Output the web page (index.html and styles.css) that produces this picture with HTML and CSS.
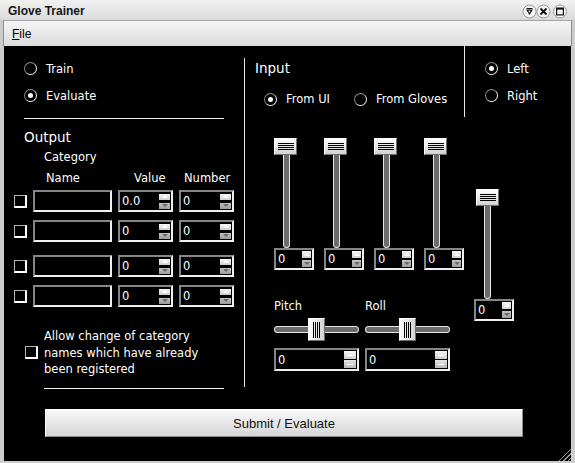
FILE: index.html
```html
<!DOCTYPE html>
<html>
<head>
<meta charset="utf-8">
<title>Glove Trainer</title>
<link rel="stylesheet" href="styles.css">
</head>
<body>
<div class="window">
  <div class="titlebar">
    <span class="title">Glove Trainer</span>
    <svg class="wm" width="50" height="18" viewBox="0 0 50 18">
      <g fill="#f6f6f6" stroke="#9a9a9a" stroke-width="1">
        <circle cx="7.5" cy="9.5" r="6.5"/>
        <circle cx="21.5" cy="9.5" r="6.5"/>
        <circle cx="38" cy="9.5" r="6.5"/>
      </g>
      <path d="M4.5 6.5 H10.5 M5.2 8.2 L7.5 11.8 L9.8 8.2 Z" stroke="#111" stroke-width="1.2" fill="none"/>
      <path d="M18.5 6.5 L24.5 12.5 M24.5 6.5 L18.5 12.5" stroke="#111" stroke-width="1.8"/>
      <rect x="34.6" y="6.1" width="6.8" height="6.8" fill="none" stroke="#111" stroke-width="1.2"/>
      <line x1="34.6" y1="6.8" x2="41.4" y2="6.8" stroke="#111" stroke-width="1.6"/>
    </svg>
  </div>
  <div class="menubar"><span class="menu"><u>F</u>ile</span></div>
  <div class="content">
    <div class="main">
      <div class="left">
        <div class="radios">
          <div class="radio"><span class="rb"></span>Train</div>
          <div class="radio"><span class="rb on"></span>Evaluate</div>
        </div>
        <div class="hr hr1"></div>
        <div class="heading out-h">Output</div>
        <div class="category">Category</div>
        <div class="thead"><span class="h-name">Name</span><span class="h-value">Value</span><span class="h-num">Number</span></div>
        <div class="trow first">
          <span class="cb"></span><span class="field"></span>
          <span class="spin"><span class="val">0.0</span><span class="arrows"><span class="arr up"></span><span class="arr dn"></span></span></span>
          <span class="spin"><span class="val">0</span><span class="arrows"><span class="arr up"></span><span class="arr dn"></span></span></span>
        </div>
        <div class="trow">
          <span class="cb"></span><span class="field"></span>
          <span class="spin"><span class="val">0</span><span class="arrows"><span class="arr up"></span><span class="arr dn"></span></span></span>
          <span class="spin"><span class="val">0</span><span class="arrows"><span class="arr up"></span><span class="arr dn"></span></span></span>
        </div>
        <div class="trow wide">
          <span class="cb"></span><span class="field"></span>
          <span class="spin"><span class="val">0</span><span class="arrows"><span class="arr up"></span><span class="arr dn"></span></span></span>
          <span class="spin"><span class="val">0</span><span class="arrows"><span class="arr up"></span><span class="arr dn"></span></span></span>
        </div>
        <div class="trow">
          <span class="cb"></span><span class="field"></span>
          <span class="spin"><span class="val">0</span><span class="arrows"><span class="arr up"></span><span class="arr dn"></span></span></span>
          <span class="spin"><span class="val">0</span><span class="arrows"><span class="arr up"></span><span class="arr dn"></span></span></span>
        </div>
        <div class="allow">
          <span class="cb"></span>
          <div class="allow-text">Allow change of category<br>names which have already<br>been registered</div>
        </div>
        <div class="hr hr2"></div>
      </div>
      <div class="vdiv"></div>
      <div class="right">
        <div class="input-sec">
          <div class="heading">Input</div>
          <div class="input-radios">
            <div class="radio"><span class="rb on"></span>From UI</div>
            <div class="radio"><span class="rb"></span>From Gloves</div>
          </div>
        </div>
        <div class="hand">
          <div class="radio"><span class="rb on"></span>Left</div>
          <div class="radio"><span class="rb"></span>Right</div>
        </div>
        <div class="sliders">
          <div class="vsliders">
            <div class="vslider"><span class="vthumb"></span><span class="vtrack"></span><span class="spin sm"><span class="val">0</span><span class="arrows"><span class="arr up"></span><span class="arr dn"></span></span></span></div>
            <div class="vslider"><span class="vthumb"></span><span class="vtrack"></span><span class="spin sm"><span class="val">0</span><span class="arrows"><span class="arr up"></span><span class="arr dn"></span></span></span></div>
            <div class="vslider"><span class="vthumb"></span><span class="vtrack"></span><span class="spin sm"><span class="val">0</span><span class="arrows"><span class="arr up"></span><span class="arr dn"></span></span></span></div>
            <div class="vslider"><span class="vthumb"></span><span class="vtrack"></span><span class="spin sm"><span class="val">0</span><span class="arrows"><span class="arr up"></span><span class="arr dn"></span></span></span></div>
          </div>
          <div class="hsliders">
            <div class="hslider">
              <span class="label">Pitch</span>
              <div class="hbar"><span class="htrack l"></span><span class="hthumb"></span><span class="htrack r"></span></div>
              <span class="spin lg"><span class="val">0</span><span class="arrows"><span class="arr plus"></span><span class="arr minus"></span></span></span>
            </div>
            <div class="hslider">
              <span class="label">Roll</span>
              <div class="hbar"><span class="htrack l"></span><span class="hthumb"></span><span class="htrack r"></span></div>
              <span class="spin lg"><span class="val">0</span><span class="arrows"><span class="arr plus"></span><span class="arr minus"></span></span></span>
            </div>
          </div>
        </div>
        <div class="slider5">
          <div class="vslider v5"><span class="vthumb"></span><span class="vtrack"></span><span class="spin sm"><span class="val">0</span><span class="arrows"><span class="arr up"></span><span class="arr dn"></span></span></span></div>
        </div>
      </div>
    </div>
    <div class="footer"><button class="submit">Submit / Evaluate</button></div>
  </div>
  <span class="grip"></span>
</div>
</body>
</html>
```

FILE: styles.css
```css
* { box-sizing: border-box; }
html, body { margin: 0; padding: 0; }
body {
  width: 575px;
  height: 463px;
  overflow: hidden;
  background: #000;
  font-family: "DejaVu Sans", sans-serif;
}
.window {
  position: relative;
  width: 575px;
  height: 463px;
  background: #cdcdcd;
  display: flex;
  flex-direction: column;
}
.titlebar {
  height: 20px;
  display: flex;
  align-items: center;
  justify-content: space-between;
  padding: 1px 3px 0 8px;
  background: linear-gradient(#f2f2f2, #dadada);
}
.title {
  font-family: "Liberation Sans", sans-serif;
  font-weight: bold;
  font-size: 12px;
  color: #151515;
}
.wm { display: block; }
.menubar {
  height: 26px;
  margin: 0 3px;
  background: linear-gradient(#f5f5f5, #dcdcdc);
  border-top: 1px solid #a4a4a4;
  border-left: 1px solid #8c8c8c;
  border-right: 1px solid #8c8c8c;
  display: flex;
  align-items: center;
  padding-left: 8px;
}
.menu {
  font-family: "Liberation Sans", sans-serif;
  font-size: 12px;
  color: #000;
}
.content {
  margin-left: 4px;
  width: 567px;
  height: 415px;
  background: #000;
  color: #fff;
  font-size: 11.5px;
  display: flex;
  flex-direction: column;
}
.main { display: flex; height: 346px; }

/* left panel */
.left { width: 240px; padding-top: 9px; display: flex; flex-direction: column; }
.radios { padding-left: 20px; }
.radio { display: flex; align-items: center; height: 27px; white-space: nowrap; }
.rb {
  flex: none;
  width: 13px;
  height: 13px;
  border-radius: 50%;
  border: 1px solid;
  border-color: #8a8a8a #f2f2f2 #f2f2f2 #8a8a8a;
  margin-right: 9px;
  display: flex;
  align-items: center;
  justify-content: center;
}
.rb.on::after {
  content: "";
  width: 5px;
  height: 5px;
  border-radius: 50%;
  background: #fff;
}
.hr { height: 1px; background: #f0f0f0; flex: none; }
.hr1 { margin: 9px 0 0 20px; width: 200px; }
.hr2 { margin: 10px 0 0 40px; width: 180px; }
.heading { font-size: 13.5px; line-height: 16px; }
.out-h { margin-top: 10px; padding-left: 20px; }
.category { margin-top: 5px; padding-left: 40px; line-height: 14px; }
.thead, .trow {
  display: grid;
  grid-template-columns: 13px 79px 55px 55px;
  column-gap: 6px;
  padding-left: 10px;
  align-items: center;
}
.thead { margin-top: 7px; line-height: 14px; }
.h-name { grid-column: 2; padding-left: 13px; }
.h-value { padding-left: 16px; }
.h-num { padding-left: 5px; }
.trow { height: 22px; margin-top: 8px; }
.trow.first { margin-top: 5px; }
.trow.wide { margin-top: 13px; }
.cb {
  flex: none;
  width: 13px;
  height: 13px;
  border-style: solid;
  border-width: 1px 2px 2px 1px;
  border-color: #b4b4b4 #fff #fff #b4b4b4;
  background: #000;
}
.field, .spin {
  height: 22px;
  background: #000;
  border: 2px solid;
  border-color: #858585 #f0f0f0 #f0f0f0 #858585;
}
.spin {
  display: flex;
  align-items: center;
  justify-content: space-between;
  padding: 0 1px;
}
.val { padding-left: 1px; line-height: 14px; }
.arrows { display: flex; flex-direction: column; gap: 3px; }
.arr {
  width: 11px;
  height: 6px;
  display: flex;
  align-items: center;
  justify-content: center;
}
.arr.up, .arr.plus { background: linear-gradient(#f7f7f7, #cdcdcd); }
.arr.dn, .arr.minus { background: linear-gradient(#c4c4c4, #9c9c9c); }
.arr.up::after {
  content: "";
  border-left: 3px solid transparent;
  border-right: 3px solid transparent;
  border-bottom: 3px solid #fff;
}
.arr.dn::after {
  content: "";
  border-left: 3px solid transparent;
  border-right: 3px solid transparent;
  border-top: 3px solid #686868;
}
.arr.plus::after, .arr.minus::after {
  content: "";
  width: 6px;
  height: 1px;
  background: #fff;
}
.spin.sm .arrows { gap: 2px; }
.spin.sm .arr { width: 9px; height: 7px; }
.spin.lg { height: 23px; }
.spin.lg .arrows { gap: 1px; }
.spin.lg .arr { width: 12px; height: 8px; }
.spin.lg .arr.minus { background: linear-gradient(#e6e6e6, #b8b8b8); }
.allow {
  display: flex;
  align-items: center;
  margin-top: 21px;
  padding-left: 21px;
}
.allow .cb { margin-right: 6px; }
.allow-text { line-height: 16.5px; white-space: nowrap; }

.vdiv { width: 1px; background: #e8e8e8; margin-top: 12px; height: 329px; flex: none; }

/* right panel */
.right {
  width: 326px;
  display: grid;
  grid-template-columns: 219px 107px;
  grid-template-rows: 71px auto;
}
.input-sec { padding: 14px 0 0 10px; }
.input-radios {
  display: flex;
  gap: 24px;
  margin-top: 16px;
  padding-left: 9px;
}
.input-radios .radio { height: 14px; }
.hand {
  border-left: 1px solid #e8e8e8;
  padding: 9px 0 0 20px;
}
.vsliders { display: flex; gap: 10px; padding-left: 29px; padding-top: 21px; }
.vslider { display: flex; flex-direction: column; width: 40px; }
.vthumb {
  width: 23px;
  height: 17px;
  background: linear-gradient(#fdfdfd, #d2d2d2);
  border: 1px solid;
  border-color: #fff #6e6e6e #6e6e6e #fff;
  display: flex;
  align-items: center;
  justify-content: center;
}
.vthumb::after {
  content: "";
  width: 16px;
  height: 7px;
  background: repeating-linear-gradient(to bottom, #000 0 1px, transparent 1px 2px);
}
.vtrack {
  width: 7px;
  height: 93px;
  margin-left: 9px;
  background: #6c6c6c;
  border: 1px solid #e6e6e6;
  border-top: 0;
  border-radius: 0 0 4px 4px;
}
.hsliders { display: flex; gap: 6px; padding-left: 29px; margin-top: 29px; }
.hslider { width: 85px; display: flex; flex-direction: column; }
.label { line-height: 14px; }
.hbar { display: flex; align-items: center; height: 23px; margin-top: 5px; }
.htrack {
  flex: 1;
  height: 7px;
  background: #6c6c6c;
  border: 1px solid #e6e6e6;
}
.htrack.l { border-right: 0; border-radius: 4px 0 0 4px; }
.htrack.r { border-left: 0; border-radius: 0 4px 4px 0; }
.hthumb {
  width: 17px;
  height: 23px;
  background: linear-gradient(to right, #fdfdfd, #d2d2d2);
  border: 1px solid;
  border-color: #fff #6e6e6e #6e6e6e #fff;
  display: flex;
  align-items: center;
  justify-content: center;
}
.hthumb::after {
  content: "";
  width: 7px;
  height: 16px;
  background: repeating-linear-gradient(to right, #000 0 1px, transparent 1px 2px);
}
.hslider .spin { margin-top: 7px; }
.slider5 { padding: 72px 0 0 10px; }
.v5 .vthumb { margin-left: 2px; }
.v5 .vtrack { margin-left: 10px; }

/* footer */
.footer { padding: 17px 0 0 41px; }
.submit {
  display: block;
  width: 478px;
  height: 28px;
  padding: 0;
  font-family: "Liberation Sans", sans-serif;
  font-size: 13px;
  color: #111;
  background: linear-gradient(#f8f8f8, #d6d6d6);
  border: 1px solid;
  border-color: #fdfdfd #8a8a8a #8a8a8a #fdfdfd;
}
.grip {
  position: absolute;
  right: 4px;
  bottom: 2px;
  width: 14px;
  height: 14px;
  background: repeating-linear-gradient(135deg, transparent 0 2px, #9a9a9a 2px 3px);
  clip-path: polygon(100% 0, 100% 100%, 0 100%);
}
```
